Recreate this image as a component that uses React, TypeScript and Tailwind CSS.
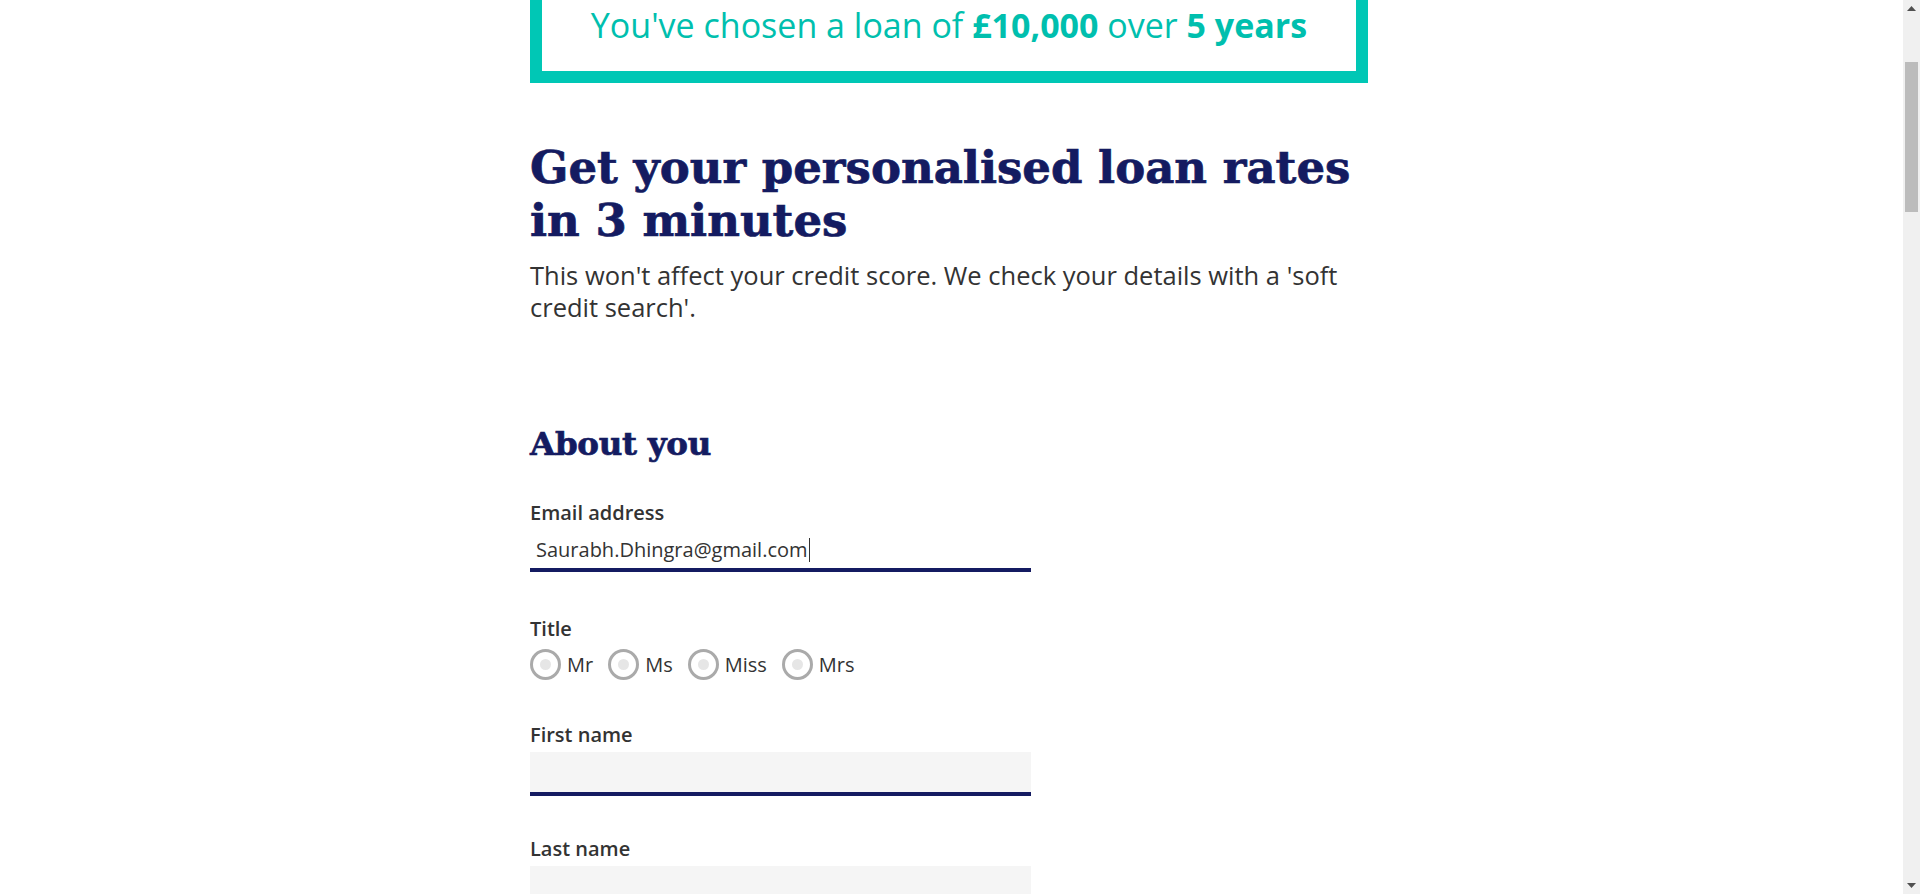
const navy = "text-[#141b61]";
const serif = "font-['DejaVu_Serif',serif] [-webkit-text-stroke:0.7px_#141b61]";

function Radio({ label }: { label: string }) {
  return (
    <label className="flex items-center gap-[6px]">
      <span className="flex h-[31px] w-[31px] items-center justify-center rounded-full border-[3px] border-[#aaaaaa] bg-white">
        <span className="h-[11px] w-[11px] rounded-full bg-[#e6e6e6]" />
      </span>
      <span className="text-[20px] leading-[28px] text-[#333333]">{label}</span>
    </label>
  );
}

function Label({ text, className = "" }: { text: string; className?: string }) {
  return <span className={`text-[20px] font-semibold leading-[28px] text-[#333333] ${className}`}>{text}</span>;
}

function Scrollbar() {
  return (
    <div className="flex h-full w-[17px] shrink-0 flex-col items-center bg-[#f0f0f0]">
      <div className="flex h-[17px] w-full items-center justify-center">
        <svg width="9" height="5" viewBox="0 0 9 5">
          <path d="M0 5 L4.5 0 L9 5 Z" fill="#505050" />
        </svg>
      </div>
      <div className="mt-[45px] h-[150px] w-[13px] bg-[#bcbcbc]" />
      <div className="flex-1" />
      <div className="flex h-[17px] w-full items-center justify-center">
        <svg width="9" height="5" viewBox="0 0 9 5">
          <path d="M0 0 L4.5 5 L9 0 Z" fill="#505050" />
        </svg>
      </div>
    </div>
  );
}

export default function App() {
  return (
    <div className="flex h-[894px] w-full overflow-hidden bg-white font-['Open_Sans',sans-serif]">
      <main className="flex-1 overflow-hidden pr-[5px]">
        <div className="mx-auto flex w-[838px] flex-col">
          {/* loan summary banner, top edge scrolled out of view */}
          <div className="flex h-[83px] items-start justify-center border-x-[12px] border-b-[12px] border-[#00c7b5] pt-[2px]">
            <p className="text-[34px] leading-[46px] text-[#00bfae]">
              You've chosen a loan of <b className="font-bold">£10,000</b> over <b className="font-bold">5 years</b>
            </p>
          </div>

          <h1 className={`mt-[58px] ${serif} text-[45px] font-bold leading-[53px] ${navy}`}>
            Get your personalised loan rates in 3 minutes
          </h1>
          <p className="mt-[12px] text-[25.5px] leading-[32px] text-[#333333]">
            This won't affect your credit score. We check your details with a 'soft credit search'.
          </p>

          <h2 className={`mt-[101px] ${serif} text-[32.5px] font-bold leading-[40px] tracking-[-0.3px] ${navy}`}>
            About you
          </h2>

          <div className="flex w-[501px] flex-col">
            <Label text="Email address" className="mt-[35px]" />
            <div className="flex h-[45px] items-center border-b-[4px] border-[#141b61] bg-white px-[6px] pt-[4px]">
              <span className="text-[20px] leading-[28px] text-[#333333]">Saurabh.Dhingra@gmail.com</span>
              <span className="ml-[1px] h-[24px] w-[1px] bg-[#333333]" />
            </div>

            <Label text="Title" className="mt-[43px]" />
            <div className="mt-[6px] flex items-center gap-[15px]">
              <Radio label="Mr" />
              <Radio label="Ms" />
              <Radio label="Miss" />
              <Radio label="Mrs" />
            </div>

            <Label text="First name" className="mt-[41px]" />
            <div className="mt-[3px] h-[44px] border-b-[4px] border-[#141b61] bg-[#f5f5f5]" />

            <Label text="Last name" className="mt-[39px]" />
            <div className="mt-[3px] h-[44px] border-b-[4px] border-[#141b61] bg-[#f5f5f5]" />
          </div>
        </div>
      </main>
      <Scrollbar />
    </div>
  );
}
